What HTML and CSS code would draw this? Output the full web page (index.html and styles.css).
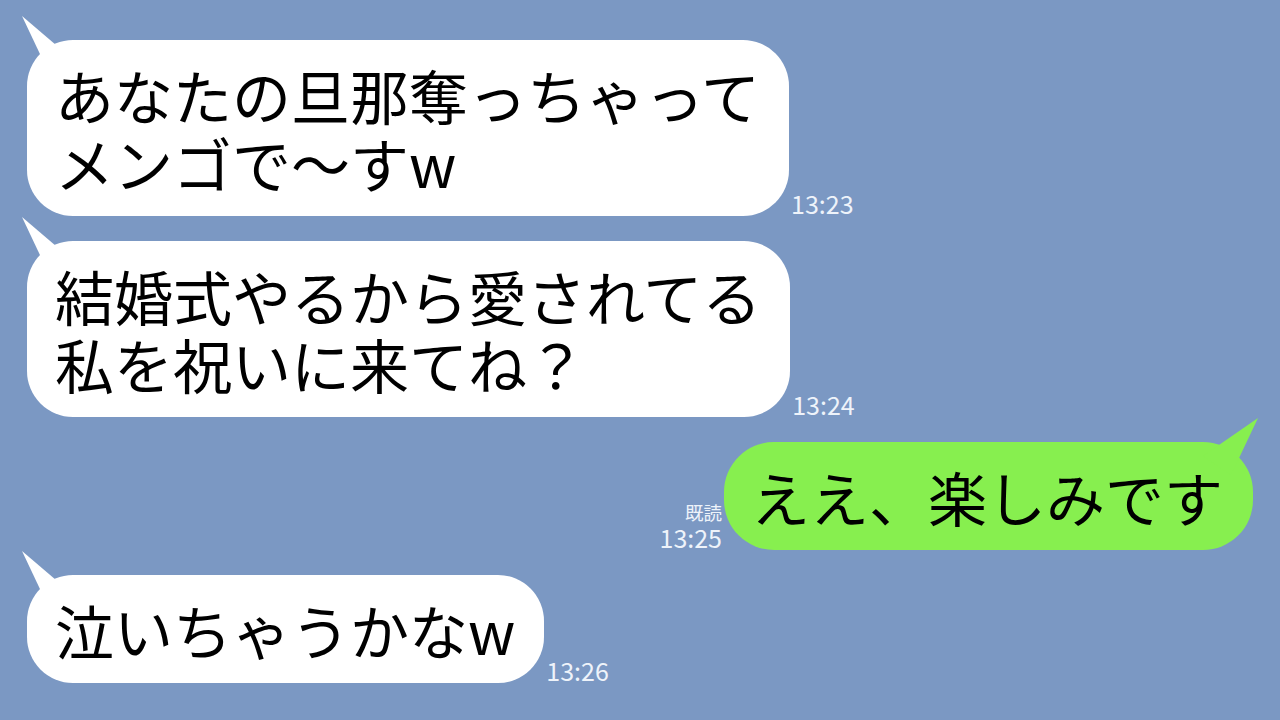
FILE: index.html
```html
<!DOCTYPE html>
<html>
<head>
  <meta charset="utf-8">
  <title>トーク</title>
  <link rel="stylesheet" href="styles.css">
</head>
<body>
  <div class="chat">
    <div class="row">
      <div class="bubble">あなたの旦那奪っちゃって<br>メンゴで〜すw</div>
      <div class="meta"><span class="time">13:23</span></div>
    </div>
    <div class="row">
      <div class="bubble">結婚式やるから愛されてる<br>私を祝いに来てね？</div>
      <div class="meta"><span class="time">13:24</span></div>
    </div>
    <div class="row mine">
      <div class="meta"><span class="read">既読</span><span class="time">13:25</span></div>
      <div class="bubble">ええ、楽しみです</div>
    </div>
    <div class="row">
      <div class="bubble">泣いちゃうかなw</div>
      <div class="meta"><span class="time">13:26</span></div>
    </div>
  </div>
</body>
</html>
```

FILE: styles.css
```css
body {
  margin: 0;
  background: #7b98c3;
  font-family: "Noto Sans CJK JP", "Noto Sans", sans-serif;
}
.chat {
  display: flex;
  flex-direction: column;
  gap: 25px;
  padding: 40px 27px 0;
}
.row {
  display: flex;
  align-items: flex-end;
}
.row.mine {
  justify-content: flex-end;
}
.bubble {
  position: relative;
  background: #fff;
  color: #000;
  border-radius: 46px;
  padding: 21px 29px 19px 28px;
  font-size: 59px;
  line-height: 68px;
  white-space: nowrap;
}
.bubble::before {
  content: "";
  position: absolute;
  left: -6px;
  top: -25px;
  width: 50px;
  height: 58px;
  background: inherit;
  clip-path: polygon(1px 1px, 49px 42px, 27px 56px);
}
.mine .bubble {
  background: #87ef4f;
  border-radius: 50px;
  padding: 21px 30px 19px 27px;
}
.mine .bubble::before {
  left: auto;
  right: -6px;
  width: 58px;
  height: 60px;
  clip-path: polygon(57px 1px, 2px 39px, 30px 58px);
}
.meta {
  display: flex;
  flex-direction: column;
  color: #eef3fa;
  margin: 0 2px;
}
.mine .meta {
  align-items: flex-end;
}
.time {
  font-size: 25px;
  line-height: 25px;
}
.read {
  font-size: 18.5px;
  line-height: 26px;
}
```
